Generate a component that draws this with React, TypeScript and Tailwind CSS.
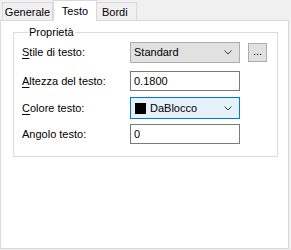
import React from 'react'

const font = { fontFamily: '"Liberation Sans", Arial, sans-serif' }

function Chevron() {
  return (
    <svg width="8" height="5" viewBox="0 0 8 5" className="shrink-0">
      <polyline points="0.5,0.5 4,4 7.5,0.5" fill="none" stroke="#3c3c3c" strokeWidth="1" />
    </svg>
  )
}

function Label({ mn, rest }: { mn: string; rest: string }) {
  return (
    <div className="w-[108px] shrink-0">
      {mn ? <span className="underline underline-offset-2">{mn}</span> : null}
      {rest}
    </div>
  )
}

export default function App() {
  return (
    <div
      className="w-[291px] h-[250px] bg-[#f0f0f0] text-[11px] text-black overflow-hidden"
      style={font}
    >
      {/* tabs */}
      <div className="flex h-[20px] items-end pl-[2px]">
        <div className="flex h-[18px] w-[51px] items-center justify-center border border-b-0 border-[#d9d9d9] bg-[#f0f0f0] pt-[1px]">
          Generale
        </div>
        <div className="relative z-10 -mb-px flex h-[21px] w-[44px] justify-center border border-b-0 border-[#d9d9d9] bg-white pt-[2px]">
          Testo
        </div>
        <div className="flex h-[18px] w-[40px] items-center justify-start border border-b-0 border-l-0 border-[#d9d9d9] bg-[#f0f0f0] pl-[5px] pt-[1px]">
          Bordi
        </div>
      </div>

      {/* panel */}
      <div className="h-[229px] w-[289px] border border-[#d9d9d9] bg-white pt-[4px]">
        <fieldset className="ml-[12px] w-[265px] border border-[#dcdcdc] pb-[12px] pl-[8px] pt-[2px]">
          <legend className="ml-[6px] px-px leading-[15px]">Proprietà</legend>

          <div className="flex h-[21px] items-center">
            <Label mn="S" rest="tile di testo:" />
            <div className="flex h-[21px] w-[110px] items-center justify-between border border-[#adadad] bg-[#e1e1e1] pl-[3px] pr-[7px]">
              <span>Standard</span>
              <Chevron />
            </div>
            <div className="ml-[8px] flex h-[19px] w-[19px] items-center justify-center border border-[#adadad] bg-[#e1e1e1] pb-[3px] leading-none">
              ...
            </div>
          </div>

          <div className="mt-[8px] flex h-[20px] items-center">
            <Label mn="A" rest="ltezza del testo:" />
            <div className="flex h-[20px] w-[110px] items-center border border-[#7a7a7a] bg-white pl-[3px]">
              0.1800
            </div>
          </div>

          <div className="mt-[6px] flex h-[22px] items-center">
            <Label mn="C" rest="olore testo:" />
            <div className="flex h-[22px] w-[110px] items-center border border-[#0078d7] bg-[#e5f1fb] pl-[4px] pr-[7px]">
              <span className="h-[11px] w-[11px] shrink-0 bg-black" />
              <span className="ml-[4px] flex-1">DaBlocco</span>
              <Chevron />
            </div>
          </div>

          <div className="mt-[5px] flex h-[20px] items-center">
            <Label mn="" rest="Angolo testo:" />
            <div className="flex h-[20px] w-[110px] items-center border border-[#7a7a7a] bg-white pl-[3px]">
              0
            </div>
          </div>
        </fieldset>
      </div>
    </div>
  )
}
